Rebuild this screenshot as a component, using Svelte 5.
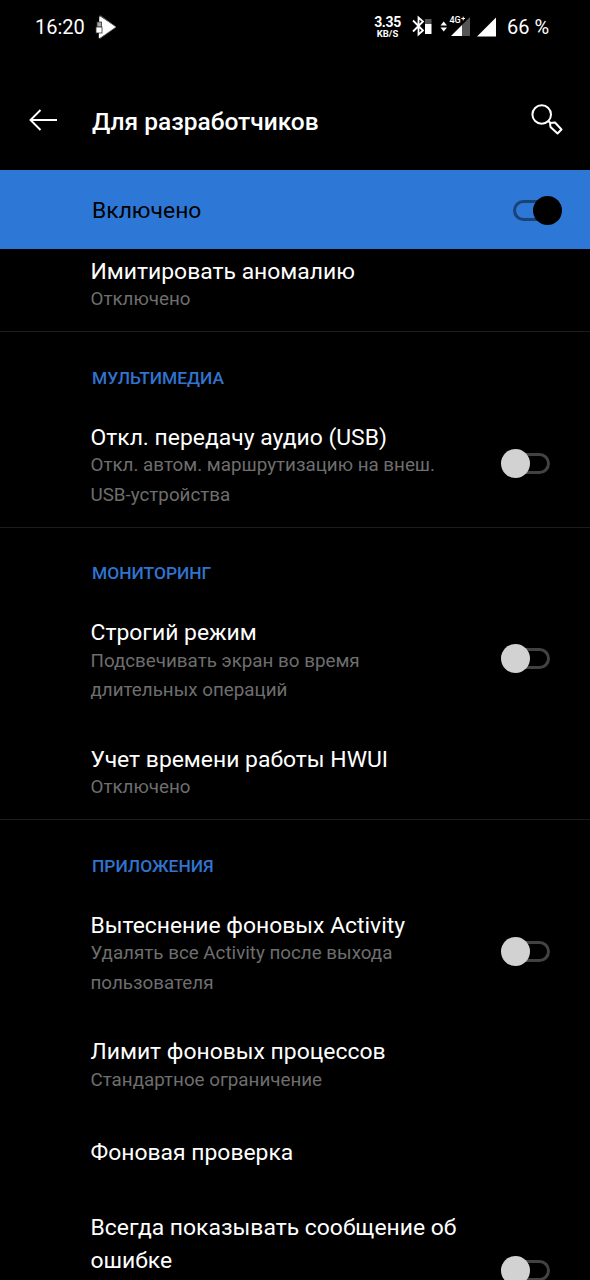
<script lang="ts">
    let enabled = true;

    let sections = [
        {
            label: "",
            items: [
                { title: "Имитировать аномалию", text: "Отключено" },
            ],
        },
        {
            label: "Мультимедиа",
            items: [
                { title: "Откл. передачу аудио (USB)", text: "Откл. автом. маршрутизацию на внеш. USB-устройства", toggle: true, on: false },
            ],
        },
        {
            label: "Мониторинг",
            items: [
                { title: "Строгий режим", text: "Подсвечивать экран во время длительных операций", toggle: true, on: false },
                { title: "Учет времени работы HWUI", text: "Отключено" },
            ],
        },
        {
            label: "Приложения",
            items: [
                { title: "Вытеснение фоновых Activity", text: "Удалять все Activity после выхода пользователя", toggle: true, on: false },
                { title: "Лимит фоновых процессов", text: "Стандартное ограничение" },
                { title: "Фоновая проверка", text: "" },
                { title: "Всегда показывать сообщение об ошибке", text: "", toggle: true, on: false, tall: true },
            ],
        },
    ];
</script>

<div class="screen">
    <div class="status">
        <span class="time">16:20</span>
        <svg class="app-icon" width="22" height="24" viewBox="0 0 22 24">
            <path d="M5 2 L20 12 L4.500 22.500 Z" fill="#fff" stroke="#fff" stroke-width="1.500" stroke-linejoin="round" />
            <path d="M4.500 1 L6 1 L21 12 L5 23.500" fill="none" stroke="#777" stroke-width="0.800" />
            <rect x="2" y="7" width="4.500" height="5" fill="#aaa" stroke="#333" stroke-width="0.800" />
            <rect x="1" y="12" width="6" height="6" fill="#fff" stroke="#333" stroke-width="0.800" />
        </svg>
        <div class="speed">
            <b>3.35</b>
            <small>KB/S</small>
        </div>
        <svg width="63" height="24" viewBox="412 15 63 24">
            <path d="M414 20.500 L424 30.500 L419.500 34.500 V17.500 L424 21.500 L414 31.500" fill="none" stroke="#fff" stroke-width="1.800" />
            <rect x="426" y="19" width="6.5" height="5" fill="#555" />
            <rect x="426" y="24" width="6.5" height="10" fill="#fff" />
            <path d="M441.500 25.500 L444.700 21.500 L448 25.500 Z M441.500 27.500 L444.700 31.500 L448 27.500 Z" fill="#fff" />
            <path d="M471 17 V36 H463 V25 Z" fill="#555" />
            <path d="M452 36 L463 25 V36 Z" fill="#fff" />
            <text x="450.500" y="23" fill="#fff" font-size="9" font-weight="500">4G</text>
            <path d="M462.300 18.500 H466 M464.200 16.700 V20.400" stroke="#fff" stroke-width="1" />
        </svg>
        <svg class="signal" width="20" height="20" viewBox="0 0 20 20">
            <path d="M0 19.500 L19 0.500 V19.500 Z" fill="#fff" />
        </svg>
        <span class="battery">66 %</span>
    </div>

    <div class="header">
        <svg width="30" height="24" viewBox="0 0 30 24" fill="none" stroke="#fff" stroke-width="1.900">
            <path d="M29 12 H3 M12.500 2 L2.500 12 L12.500 22" />
        </svg>
        <h1>Для разработчиков</h1>
        <svg width="34" height="34" viewBox="0 0 34 34" fill="none" stroke="#fff" stroke-width="2">
            <circle cx="11.700" cy="11.500" r="9.300" />
            <path d="M18.300 18 L20.500 20 M20 20 L25 19.500 L31.500 26.500 L27.500 30.500 L20.500 24 Z" stroke-linejoin="round" />
        </svg>
    </div>

    <div class="banner">
        <span>Включено</span>
        <button class="switch" class:on={enabled} on:click={() => (enabled = !enabled)} aria-label="Включено"></button>
    </div>

    <div class="list">
        {#each sections as section}
            <div class="section">
                {#if section.label}
                    <div class="label">{section.label}</div>
                {/if}
                {#each section.items as item}
                    <div class="item" class:single={!item.text && !item.tall} class:tall={item.tall}>
                        <div class="body">
                            <div class="title">{item.title}</div>
                            {#if item.text}
                                <div class="text">{item.text}</div>
                            {/if}
                        </div>
                        {#if item.toggle}
                            <button class="switch" class:on={item.on} on:click={() => (item.on = !item.on)} aria-label={item.title}></button>
                        {/if}
                    </div>
                {/each}
            </div>
        {/each}
    </div>
</div>

<style>
    :global(body) {
        background: #000;
    }

    .screen {
        width: 590px;
        height: 1280px;
        display: flex;
        flex-direction: column;
        overflow: hidden;
        background: #000;
        color: #fff;
        font-family: Roboto, sans-serif;
    }

    .status {
        flex: none;
        display: flex;
        align-items: center;
        height: 54px;
        padding: 0 40px 0 35px;
        font-size: 20px;
    }

    .time {
        width: 50px;
    }

    .app-icon {
        margin: 0 auto 0 10px;
    }

    .speed {
        display: flex;
        flex-direction: column;
        align-items: center;
        width: 27px;
        margin: -2px 10px 0 0;
    }

    .speed b {
        font-size: 14px;
        line-height: 14px;
        letter-spacing: -0.4px;
    }

    .speed small {
        font-size: 9.5px;
        font-weight: bold;
        line-height: 9px;
    }

    .signal {
        margin: 0 10px 0 3px;
    }

    .battery {
        width: 43px;
        white-space: nowrap;
    }

    .header {
        flex: none;
        display: flex;
        align-items: center;
        height: 116px;
        box-sizing: border-box;
        padding: 16px 26px 0 28px;
    }

    h1 {
        flex: 1;
        margin: 2px 0 0 34px;
        font-size: 24.5px;
        font-weight: 500;
    }

    .banner {
        flex: none;
        display: flex;
        align-items: center;
        justify-content: space-between;
        height: 79px;
        padding: 0 28px 0 92px;
        background: #2d78d6;
        color: #000;
        font-size: 22.9px;
    }

    .banner span {
        padding-top: 2px;
    }

    .banner .switch {
        margin-top: 1px;
    }

    .list {
        flex: 1;
        overflow: hidden;
    }

    .section {
        border-bottom: 1px solid #1c1c1c;
    }

    .section:first-child {
        margin-top: -15px;
    }

    .label {
        height: 68px;
        box-sizing: border-box;
        padding: 35.5px 0 0 92px;
        color: #3074cf;
        font-size: 17.4px;
        font-weight: 500;
        line-height: 20px;
        text-transform: uppercase;
    }

    .item {
        display: flex;
        align-items: center;
        justify-content: space-between;
        padding: 20.5px 40.5px 16.5px 90.5px;
    }

    .item .switch {
        margin-top: -4px;
    }

    .single {
        padding-top: 24.5px;
        padding-bottom: 21px;
    }

    .tall {
        height: 123px;
        align-items: flex-start;
    }

    .tall .switch {
        margin-top: 45px;
    }

    .body {
        width: 375px;
    }

    .title {
        font-size: 22.9px;
        line-height: 33px;
    }

    .text {
        margin-top: -2.5px;
        color: #6e6e6e;
        font-size: 18.8px;
        line-height: 29.5px;
    }

    .switch {
        position: relative;
        flex: none;
        width: 49px;
        height: 29px;
        padding: 0;
        border: none;
        background: none;
    }

    .switch::before {
        content: "";
        position: absolute;
        top: 4px;
        right: 0;
        width: 42px;
        height: 21px;
        box-sizing: border-box;
        border: 3px solid #424242;
        border-radius: 11px;
    }

    .switch::after {
        content: "";
        position: absolute;
        top: 0;
        left: 0;
        width: 29px;
        height: 29px;
        border-radius: 50%;
        background: #d2d2d2;
    }

    .switch.on::before {
        right: auto;
        left: 0;
        border-color: #194377;
    }

    .switch.on::after {
        left: auto;
        right: 0;
        background: #000;
    }
</style>
